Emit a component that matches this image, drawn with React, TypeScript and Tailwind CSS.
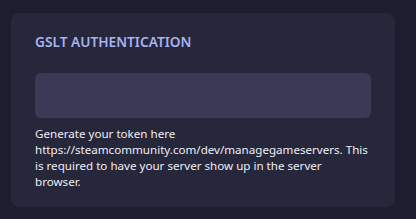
export default function App() {
  return (
    <div
      className="min-h-screen bg-[#1d1d2f] pt-[13px] pl-[11px]"
      style={{ fontFamily: '"Noto Sans", "Open Sans", sans-serif' }}
    >
      <div className="w-[384px] h-[194px] rounded-lg bg-[#27273b] px-6 pt-[19px]">
        <h2 className="text-[13.7px] leading-5 font-semibold uppercase text-[#a8b3f0]">
          GSLT Authentication
        </h2>
        <div className="mt-[21px] h-[45px] w-full rounded-md bg-[#3b3a56]"></div>
        <p className="mt-[8px] w-[334px] text-[11.6px] leading-4 text-[#eceef5]">
          Generate your token here https://steamcommunity.com/dev/managegameservers. This is
          required to have your server show up in the server browser.
        </p>
      </div>
    </div>
  );
}
